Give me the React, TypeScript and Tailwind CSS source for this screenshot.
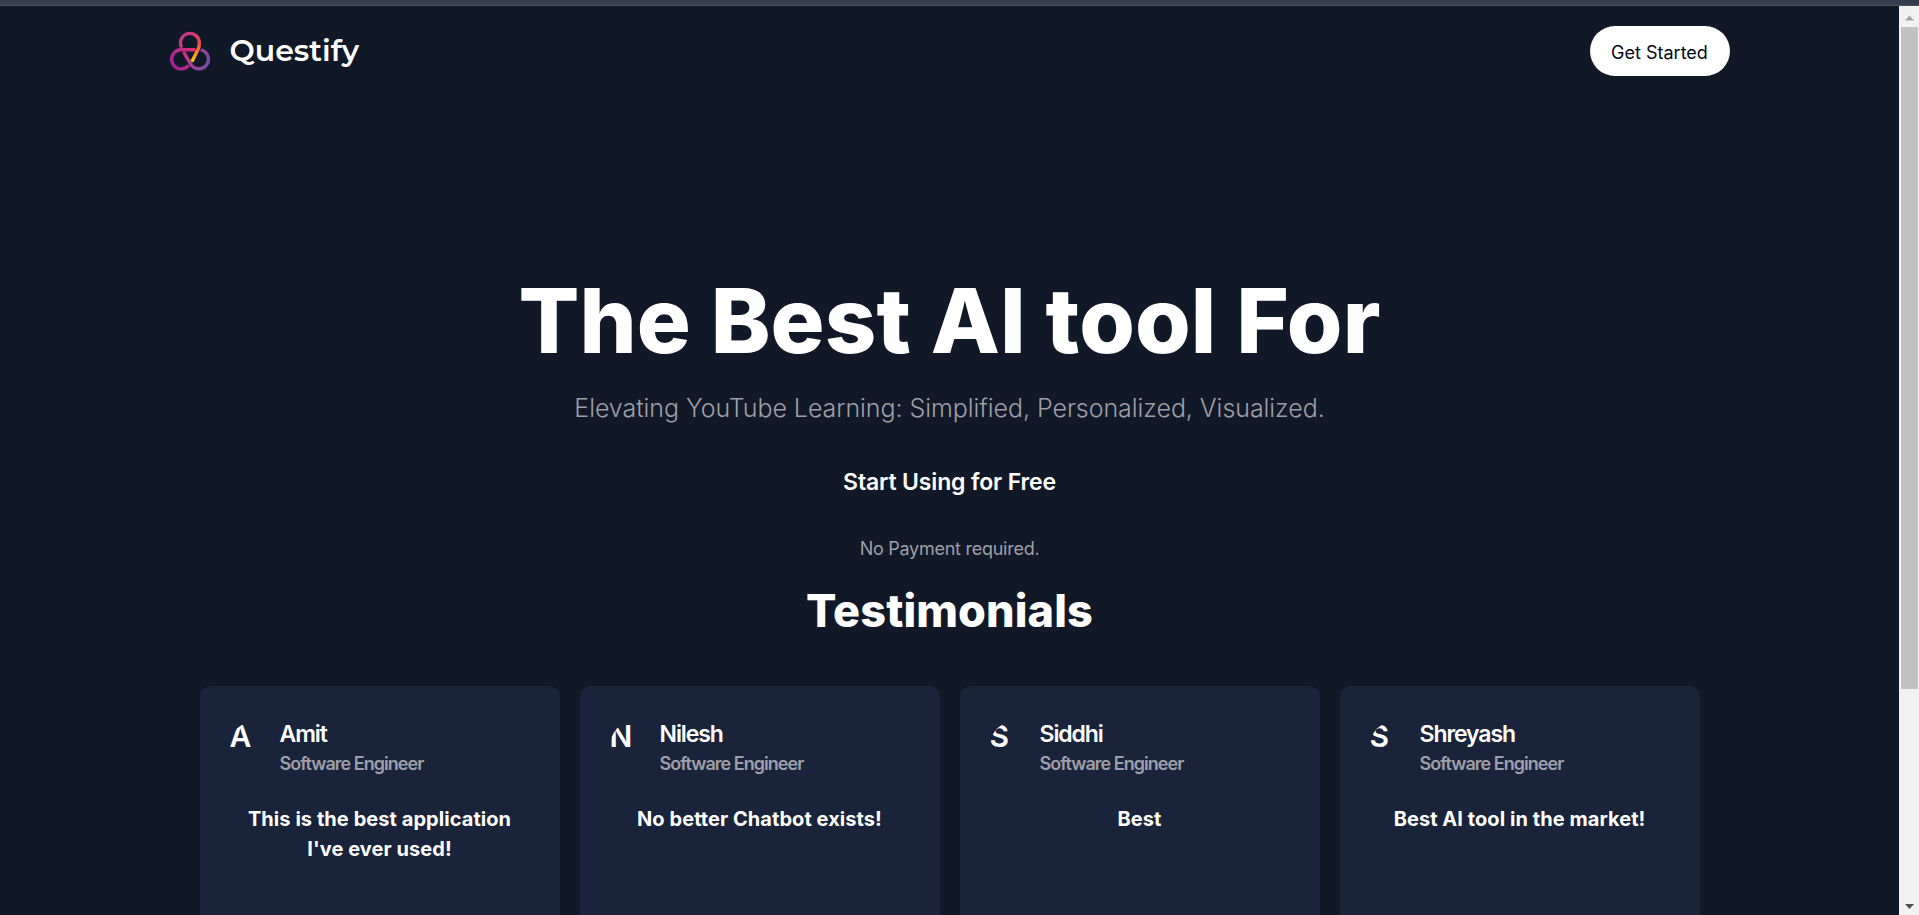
import React from "react";

const testimonials = [
  { name: "Amit", title: "Software Engineer", quote: "This is the best application I've ever used!" },
  { name: "Nilesh", title: "Software Engineer", quote: "No better Chatbot exists!" },
  { name: "Siddhi", title: "Software Engineer", quote: "Best" },
  { name: "Shreyash", title: "Software Engineer", quote: "Best AI tool in the market!" },
];

function Logo() {
  return (
    <svg width="40" height="42" viewBox="0 -0.7 40 42" fill="none" strokeWidth="3.4">
      <defs>
        <linearGradient id="top" x1="10" y1="5" x2="30" y2="20" gradientUnits="userSpaceOnUse">
          <stop stopColor="#b03a8e" />
          <stop offset="0.5" stopColor="#e23a6b" />
          <stop offset="1" stopColor="#f5533f" />
        </linearGradient>
        <linearGradient id="tail" x1="30" y1="12" x2="22" y2="30" gradientUnits="userSpaceOnUse">
          <stop stopColor="#f0484a" />
          <stop offset="1" stopColor="#fdc300" />
        </linearGradient>
        <linearGradient id="left" x1="4" y1="34" x2="26" y2="18" gradientUnits="userSpaceOnUse">
          <stop stopColor="#a5248c" />
          <stop offset="0.5" stopColor="#bb2c87" />
          <stop offset="1" stopColor="#e6306c" />
        </linearGradient>
        <linearGradient id="right" x1="14" y1="22" x2="40" y2="32" gradientUnits="userSpaceOnUse">
          <stop stopColor="#d92f77" />
          <stop offset="0.5" stopColor="#a0419a" />
          <stop offset="1" stopColor="#704fa3" />
        </linearGradient>
      </defs>
      <path d="M25.5 19H11.3A9.6 9.6 0 1 0 18.8 34.6" stroke="url(#left)" />
      <path d="M13.6 21.3L20.6 33.2A9.5 9.5 0 1 0 30.6 19.2" stroke="url(#right)" />
      <path d="M11.8 16.9A9.4 9.4 0 1 1 29.2 13.5" stroke="url(#top)" />
      <path d="M29.2 12.5Q29.5 15.5 28 18.7L21.8 31" stroke="url(#tail)" />
    </svg>
  );
}

function Scrollbar() {
  return (
    <div className="flex w-5 flex-col justify-between bg-[#f1f1f1]">
      <div>
        <svg width="20" height="21" viewBox="0 0 20 21" className="block">
          <path d="M6 14.5L10.5 9.5L15 14.5Z" fill="#a3a3a3" />
        </svg>
        <div className="ml-[2px] h-[662px] w-[17px] bg-[#c1c1c1]" />
      </div>
      <svg width="20" height="21" viewBox="0 0 20 21" className="block">
        <path d="M6 10L10.5 15L15 10Z" fill="#505050" />
      </svg>
    </div>
  );
}

export default function App() {
  return (
    <div className="flex h-[915px] flex-col overflow-hidden bg-[#111827] font-['Inter',sans-serif] text-white">
      <div className="h-[6px] shrink-0 border-b border-[#4b5154] bg-[#343d4e]" />
      <div className="flex min-h-0 flex-1">
        <div className="flex-1 overflow-hidden">
          <div className="mx-auto w-[1560px]">
            <nav className="flex h-[90px] items-center justify-between">
              <div className="flex items-center">
                <Logo />
                <span className="ml-5 font-['Montserrat',sans-serif] text-[30px] font-semibold leading-10">Questify</span>
              </div>
              <button className="h-[50px] w-[140px] rounded-full bg-white pt-0.5 text-[18px] leading-[25px] text-[#020817]">Get Started</button>
            </nav>
            <main>
              <section className="flex flex-col items-center pt-[180px] text-center">
                <h1 className="text-[90px] font-extrabold leading-[90px] tracking-[0.1px]">The Best AI tool For</h1>
                <p className="mt-[25px] text-[25px] font-light leading-[35px] tracking-[-0.06px] text-zinc-400">
                  Elevating YouTube Learning: Simplified, Personalized, Visualized.
                </p>
                <button className="mt-[39px] text-[23px] font-semibold leading-[35px] tracking-[-0.15px]">Start Using for Free</button>
                <p className="mt-[36px] text-[18px] leading-[25px] tracking-[-0.26px] text-zinc-400">No Payment required.</p>
              </section>
              <section className="px-[30px]">
                <h2 className="mt-[25px] text-center text-[45px] font-extrabold leading-[50px] tracking-[0.1px]">Testimonials</h2>
                <div className="mt-[50px] grid grid-cols-4 gap-5">
                  {testimonials.map((t) => (
                    <article key={t.name} className="h-[280px] rounded-[10px] bg-[#192339] p-[30px]">
                      <div className="flex items-center">
                        <div className="h-[50px] w-[50px] overflow-hidden rounded-full text-[30px] font-semibold leading-[30px] tracking-tighter">{t.name[0]}</div>
                        <div className="font-semibold">
                          <p className="pt-[2px] text-[23px] leading-[33px] tracking-[-1.08px]">{t.name}</p>
                          <p className="text-[18px] leading-[25px] tracking-[-0.97px] text-zinc-400">{t.title}</p>
                        </div>
                      </div>
                      <p className="mt-[28px] text-center text-[20px] font-bold leading-[30px] tracking-[0.06px]">{t.quote}</p>
                    </article>
                  ))}
                </div>
              </section>
            </main>
          </div>
        </div>
        <Scrollbar />
      </div>
    </div>
  );
}
